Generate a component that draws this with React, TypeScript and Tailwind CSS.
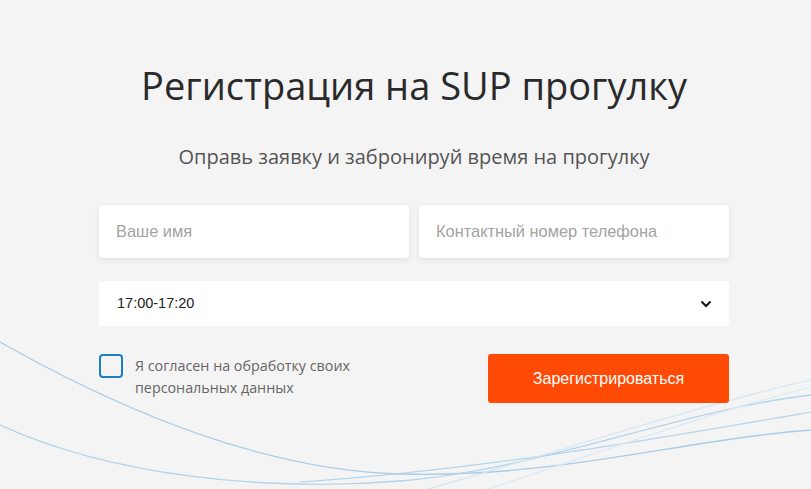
import React from "react";

export default function App() {
  return (
    <div className="relative w-full h-[489px] overflow-hidden bg-[#f4f4f4]">
      <svg className="absolute inset-0 pointer-events-none" width="811" height="489" viewBox="0 0 811 489" fill="none">
        <path d="M0,342 C120,410 260,470 400,474 C560,478 680,440 811,430" stroke="#a8cde6" strokeWidth="1.3" />
        <path d="M0,425 C110,475 260,492 400,481 C540,470 680,410 811,395" stroke="#b3d4ea" strokeWidth="1.3" />
        <path d="M300,482 C480,470 650,440 811,412" stroke="#b3d4ea" strokeWidth="1.2" />
        <path d="M425,490 C580,445 700,405 811,380" stroke="#d3e5f1" strokeWidth="1.2" />
        <path d="M485,490 C620,445 720,410 811,387" stroke="#dbe9f3" strokeWidth="1.2" />
      </svg>
      <div className="relative flex justify-center pl-[17px]">
        <div className="w-[630px] flex flex-col items-center">
          <h1 className="mt-[59px] text-[38px] leading-[52px] text-[#2a2a2a] whitespace-nowrap" style={{ fontFamily: '"Open Sans", sans-serif' }}>
            Регистрация на SUP прогулку
          </h1>
          <p className="mt-[32px] text-[20px] leading-[28px] text-[#555555] whitespace-nowrap" style={{ fontFamily: '"Open Sans", sans-serif' }}>
            Оправь заявку и забронируй время на прогулку
          </p>
          <div className="mt-[34px] w-full flex gap-[10px]">
            <div className="flex-1 h-[53px] bg-white rounded-[4px] shadow-[0_2px_6px_rgba(0,0,0,0.08)] flex items-center pl-[17px] text-[16.4px] text-[#a3a3a3]" style={{ fontFamily: '"Liberation Sans", Arial, sans-serif' }}>
              Ваше имя
            </div>
            <div className="flex-1 h-[53px] bg-white rounded-[4px] shadow-[0_2px_6px_rgba(0,0,0,0.08)] flex items-center pl-[17px] text-[16.4px] text-[#a3a3a3]" style={{ fontFamily: '"Liberation Sans", Arial, sans-serif' }}>
              Контактный номер телефона
            </div>
          </div>
          <div className="mt-[23px] w-full h-[45px] bg-white rounded-[4px] flex items-center justify-between pl-[18px] pr-[17px] text-[14.5px] text-[#222222]" style={{ fontFamily: '"Liberation Sans", Arial, sans-serif' }}>
            <span>17:00-17:20</span>
            <svg width="12" height="8" viewBox="0 0 12 8" fill="none">
              <path d="M1.5 1.5 L6 6 L10.5 1.5" stroke="#111" strokeWidth="2" />
            </svg>
          </div>
          <div className="mt-[28px] w-full flex justify-between items-start">
            <div className="flex items-start gap-[12px]">
              <div className="w-[24px] h-[24px] rounded-[4px] border-2 border-[#1b7dc4] bg-transparent" />
              <div className="text-[14.3px] leading-[22px] text-[#666666] mt-[1px]" style={{ fontFamily: '"Open Sans", sans-serif' }}>
                Я согласен на обработку своих
                <br />
                персональных данных
              </div>
            </div>
            <button className="w-[241px] h-[49px] rounded-[3px] bg-[#fe4a05] text-white text-[16px]" style={{ fontFamily: '"Liberation Sans", Arial, sans-serif' }}>
              Зарегистрироваться
            </button>
          </div>
        </div>
      </div>
    </div>
  );
}
